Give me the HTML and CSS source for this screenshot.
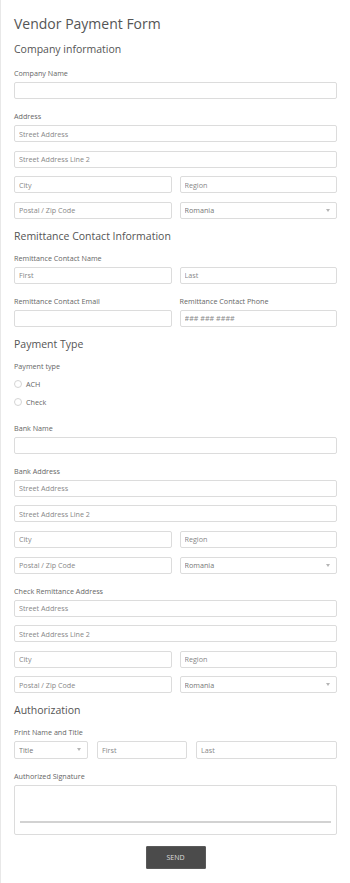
FILE: index.html
```html
<!DOCTYPE html>
<html lang="en">
  <head>
    <meta charset="UTF-8" />
    <meta name="viewport" content="width=device-width, initial-scale=1.0" />
    <title>Vendor Payment Form</title>
    <link rel="stylesheet" href="styles.css">
  </head>
  <body>
    <form class="form-wrap">
      <h1 class="form-title">Vendor Payment Form</h1>

      <h2 class="section-title first">Company information</h2>
      <div class="field">
        <label>Company Name</label>
        <input type="text" />
      </div>
      <div class="field">
        <label>Address</label>
        <div class="stack">
          <input type="text" placeholder="Street Address" />
          <input type="text" placeholder="Street Address Line 2" />
          <div class="row two">
            <input type="text" placeholder="City" />
            <input type="text" placeholder="Region" />
          </div>
          <div class="row two">
            <input type="text" placeholder="Postal / Zip Code" />
            <div class="select-box">
              <select><option>Romania</option></select>
            </div>
          </div>
        </div>
      </div>

      <h2 class="section-title">Remittance Contact Information</h2>
      <div class="field">
        <label>Remittance Contact Name</label>
        <div class="row two">
          <input type="text" placeholder="First" />
          <input type="text" placeholder="Last" />
        </div>
      </div>
      <div class="row two">
        <div class="field">
          <label>Remittance Contact Email</label>
          <input type="text" />
        </div>
        <div class="field">
          <label>Remittance Contact Phone</label>
          <input type="text" placeholder="### ### ####" />
        </div>
      </div>

      <h2 class="section-title">Payment Type</h2>
      <div class="field">
        <label>Payment type</label>
        <div class="radio-item"><input type="radio" name="ptype" /> <span>ACH</span></div>
        <div class="radio-item"><input type="radio" name="ptype" /> <span>Check</span></div>
      </div>
      <div class="field">
        <label>Bank Name</label>
        <input type="text" />
      </div>
      <div class="field">
        <label>Bank Address</label>
        <div class="stack">
          <input type="text" placeholder="Street Address" />
          <input type="text" placeholder="Street Address Line 2" />
          <div class="row two">
            <input type="text" placeholder="City" />
            <input type="text" placeholder="Region" />
          </div>
          <div class="row two">
            <input type="text" placeholder="Postal / Zip Code" />
            <div class="select-box">
              <select><option>Romania</option></select>
            </div>
          </div>
        </div>
      </div>
      <div class="field">
        <label>Check Remittance Address</label>
        <div class="stack">
          <input type="text" placeholder="Street Address" />
          <input type="text" placeholder="Street Address Line 2" />
          <div class="row two">
            <input type="text" placeholder="City" />
            <input type="text" placeholder="Region" />
          </div>
          <div class="row two">
            <input type="text" placeholder="Postal / Zip Code" />
            <div class="select-box">
              <select><option>Romania</option></select>
            </div>
          </div>
        </div>
      </div>

      <h2 class="section-title">Authorization</h2>
      <div class="field">
        <label>Print Name and Title</label>
        <div class="row three">
          <div class="select-box">
            <select><option>Title</option></select>
          </div>
          <input type="text" placeholder="First" />
          <input type="text" placeholder="Last" />
        </div>
      </div>
      <div class="field">
        <label>Authorized Signature</label>
        <div class="signature">
          <div class="sign-line"></div>
        </div>
      </div>

      <div class="actions">
        <button type="button" class="send-btn">SEND</button>
      </div>
    </form>
  </body>
</html>
```

FILE: styles.css
```css
body {
  margin: 0;
  font-family: "Open Sans", "Liberation Sans", sans-serif;
  background-color: #fff;
}
.form-wrap {
  min-height: 883px;
  box-sizing: border-box;
  border-left: 1px solid #e8e8e8;
  padding: 15px 13px 0 13px;
}
.form-title {
  margin: 0;
  font-size: 14px;
  line-height: 18px;
  font-weight: normal;
  color: #555;
}
.section-title {
  margin: 10px 0 0 0;
  font-size: 10.5px;
  line-height: 14px;
  font-weight: normal;
  color: #555;
}
.section-title.first {
  margin-top: 9px;
}
.field {
  margin-top: 12px;
}
.section-title + .field {
  margin-top: 10px;
}
.section-title.first + .field {
  margin-top: 12px;
}
.row .field {
  margin-top: 0;
}
.field + .row {
  margin-top: 12px;
}
label {
  display: block;
  font-size: 7.2px;
  line-height: 10px;
  color: #666;
  margin-bottom: 4px;
}
input[type="text"],
select {
  display: block;
  width: 100%;
  height: 17px;
  box-sizing: border-box;
  border: 1px solid #dcdcdc;
  border-radius: 2px;
  padding: 0 4px;
  font-family: inherit;
  font-size: 7.2px;
  color: #777;
  background-color: #fff;
  outline: none;
}
input::placeholder {
  color: #888;
}
.stack {
  display: flex;
  flex-direction: column;
  gap: 8.6px;
}
.row {
  display: grid;
  gap: 8px;
}
.row.two {
  grid-template-columns: 1fr 1fr;
}
.row.three {
  grid-template-columns: 74px 90px 1fr;
  gap: 9px;
}
.row.three input,
.row.three select {
  height: 18px;
}
.select-box {
  position: relative;
}
.select-box select {
  appearance: none;
  -webkit-appearance: none;
  color: #777;
}
.select-box::after {
  content: "";
  position: absolute;
  right: 7px;
  top: 7px;
  border-left: 2.5px solid transparent;
  border-right: 2.5px solid transparent;
  border-top: 3px solid #b5b5b5;
}
.radio-item {
  display: flex;
  align-items: center;
  height: 18px;
  font-size: 7.2px;
  color: #666;
}
.radio-item input {
  appearance: none;
  -webkit-appearance: none;
  width: 8px;
  height: 8px;
  margin: 0 4px 0 0;
  border: 1px solid #d4d4d4;
  border-radius: 50%;
}
.signature {
  height: 50px;
  box-sizing: border-box;
  border: 1px solid #dcdcdc;
  border-radius: 2px;
  padding: 0 5px;
}
.sign-line {
  margin-top: 35px;
  height: 2px;
  background-color: #d2d2d2;
}
.actions {
  display: flex;
  justify-content: center;
  margin-top: 11px;
}
.send-btn {
  width: 60px;
  height: 23px;
  padding: 0;
  background-color: #4b4b4b;
  border: 1px solid #5a5a5a;
  border-radius: 1px;
  color: #ddd;
  font-family: inherit;
  font-size: 7px;
  cursor: pointer;
}
```
